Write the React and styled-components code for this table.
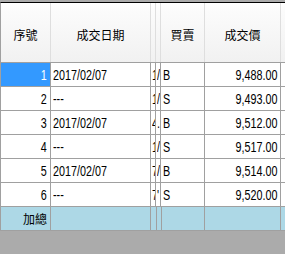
import styled, { createGlobalStyle } from "styled-components";

const GlobalStyle = createGlobalStyle`
  html, body {
    margin: 0;
    padding: 0;
    background: #ababab;
    overflow: hidden;
  }
  #root {
    width: 285px;
    height: 254px;
  }
`;

const COLUMNS = "50px 100px 5px 5px 44px 76px 80px";

const trades = [
  { no: 1, date: "2017/02/07", a: "1", b: "/", side: "B", price: "9,488.00" },
  { no: 2, date: "---", a: "1", b: "/", side: "S", price: "9,493.00" },
  { no: 3, date: "2017/02/07", a: "4", b: ".", side: "B", price: "9,512.00" },
  { no: 4, date: "---", a: "1", b: "/", side: "S", price: "9,517.00" },
  { no: 5, date: "2017/02/07", a: "7", b: "/", side: "B", price: "9,514.00" },
  { no: 6, date: "---", a: "7", b: "'", side: "S", price: "9,520.00" },
];

export default function App() {
  return (
    <>
      <GlobalStyle />
      <Page>
        <Grid>
          <HeaderRow>
            <HeadCell>序號</HeadCell>
            <HeadCell>成交日期</HeadCell>
            <HeadCell />
            <HeadCell />
            <HeadCell>買賣</HeadCell>
            <HeadCell>成交價</HeadCell>
            <HeadCell />
          </HeaderRow>
          {trades.map((t, i) => (
            <Row key={t.no}>
              <Cell $align="right" $selected={i === 0}>
                <Text $align="right">{t.no}</Text>
              </Cell>
              <Cell>
                <Text>{t.date}</Text>
              </Cell>
              <Cell $tight>
                <Text>{t.a}</Text>
              </Cell>
              <Cell $tight>
                <Text>{t.b}</Text>
              </Cell>
              <Cell>
                <Text>{t.side}</Text>
              </Cell>
              <Cell $align="right">
                <Text $align="right">{t.price}</Text>
              </Cell>
              <Cell />
            </Row>
          ))}
          <TotalRow>
            <Cell $align="right">
              <TotalLabel>加總</TotalLabel>
            </Cell>
            <Cell />
            <Cell />
            <Cell />
            <Cell />
            <Cell />
            <Cell />
          </TotalRow>
        </Grid>
      </Page>
    </>
  );
}

const Page = styled.div`
  width: 285px;
  height: 254px;
  overflow: hidden;
  padding-top: 2px;
  box-sizing: border-box;
`;

const Grid = styled.div`
  width: 360px;
  border-top: 1px solid #000;
  border-left: 1px solid #a0a0a0;
  background: #fff;
`;

const HeaderRow = styled.div`
  display: grid;
  grid-template-columns: ${COLUMNS};
  height: 60px;
  border-bottom: 1px solid #a0a0a0;
  box-sizing: border-box;
  background: linear-gradient(#ffffff 0%, #fbfbfb 15%, #f1f1f1 100%);
`;

const HeadCell = styled.div`
  display: flex;
  align-items: center;
  justify-content: center;
  padding-top: 3px;
  border-right: 1px solid #dedede;
  font-family: "Noto Sans CJK TC", sans-serif;
  font-size: 12px;
  color: #000;
  overflow: hidden;
`;

const Row = styled.div`
  display: grid;
  grid-template-columns: ${COLUMNS};
  height: 24px;
`;

const TotalRow = styled(Row)`
  background: #add8e6;
`;

const Cell = styled.div`
  display: flex;
  align-items: center;
  justify-content: ${(p) => (p.$align === "right" ? "flex-end" : "flex-start")};
  padding: ${(p) => (p.$tight ? "0 0 0 1px" : "0 3px 0 2px")};
  border-right: 1px solid #a0a0a0;
  border-bottom: 1px solid #a0a0a0;
  overflow: hidden;
  white-space: nowrap;
  color: ${(p) => (p.$selected ? "#fff" : "#000")};
  background: ${(p) => (p.$selected ? "#3399ff" : "transparent")};
`;

/* narrow, tall digits like the grid's bitmap font */
const Text = styled.span`
  display: inline-block;
  font-family: "Liberation Sans", Arial, sans-serif;
  font-size: 14px;
  line-height: 1;
  transform: scaleX(0.77);
  transform-origin: ${(p) => (p.$align === "right" ? "right" : "left")} center;
`;

const TotalLabel = styled.span`
  font-family: "Noto Sans CJK TC", sans-serif;
  font-size: 12px;
`;
